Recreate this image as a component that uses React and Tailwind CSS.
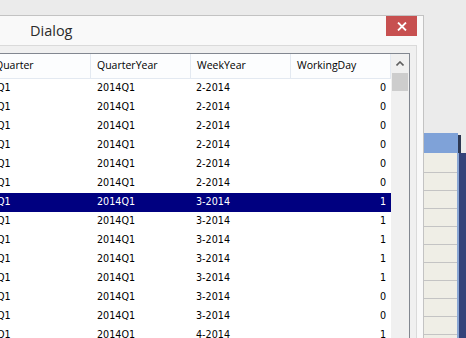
import React from 'react';

const rows = [
  ['2-2014', '0'],
  ['2-2014', '0'],
  ['2-2014', '0'],
  ['2-2014', '0'],
  ['2-2014', '0'],
  ['2-2014', '0'],
  ['3-2014', '1', true],
  ['3-2014', '1'],
  ['3-2014', '1'],
  ['3-2014', '1'],
  ['3-2014', '1'],
  ['3-2014', '0'],
  ['3-2014', '0'],
  ['4-2014', '1'],
];

const headers = ['Quarter', 'QuarterYear', 'WeekYear', 'WorkingDay'];
const widths = ['w-[102px]', 'w-[100px]', 'w-[100px]', 'w-[100px]'];

const uiFont = { fontFamily: '"Open Sans", "Noto Sans", sans-serif' };
const gridFont = { fontFamily: '"DejaVu Sans", Verdana, sans-serif' };

function CloseIcon() {
  return (
    <svg width="10" height="9" viewBox="0 0 10 9">
      <path d="M1 0.5 L9 8.5 M9 0.5 L1 8.5" stroke="#fff" strokeWidth="1.8" />
    </svg>
  );
}

function Grid() {
  return (
    <div className="flex border-t border-r border-[#828790] bg-white h-[300px]">
      <div className="w-[402px] shrink-0">
        <div className="flex h-[25px] border-b border-[#e3e9f1] bg-[#fcfdfe] text-[10.5px] text-black" style={uiFont}>
          {headers.map((h, i) => (
            <div key={h} className={`${widths[i]} shrink-0 border-r border-[#e3e9f1] pl-[6px] flex items-center`}>
              {h}
            </div>
          ))}
        </div>
        <div className="text-[9.6px]" style={gridFont}>
          {rows.map(([week, day, sel], i) => (
            <div
              key={i}
              className={`flex h-[19px] items-center ${sel ? 'bg-[#000080] text-white' : 'text-black'}`}
            >
              <div className="w-[102px] shrink-0 pl-[8px]">Q1</div>
              <div className="w-[100px] shrink-0 pl-[6px]">2014Q1</div>
              <div className="w-[100px] shrink-0 pl-[5px]">{week}</div>
              <div className="w-[100px] shrink-0 pr-[5px] text-right">{day}</div>
            </div>
          ))}
        </div>
      </div>
      <div className="w-[18px] shrink-0 bg-[#f0f0f0] flex flex-col items-center">
        <div className="h-[19px] flex items-center justify-center">
          <svg width="8" height="5" viewBox="0 0 8 5">
            <path d="M0.5 4.5 L4 1 L7.5 4.5" stroke="#606060" strokeWidth="1.6" fill="none" />
          </svg>
        </div>
        <div className="w-[16px] h-[18px] bg-[#cdcdcd]" />
      </div>
    </div>
  );
}

function BackWindow() {
  return (
    <div className="mt-[118px] shrink-0 w-[42px]">
      <div className="w-[34px] h-[20px] bg-[#7fa2d8] shadow-[3px_2px_0_#2d3852]" />
      <div className="flex">
        <div className="w-[33px] bg-[#efeee6]">
          <div className="h-[20px] border-b border-[#c4c4c4]" />
          {Array.from({ length: 10 }).map((_, i) => (
            <div key={i} className="h-[18px] border-b border-[#c4c4c4]" />
          ))}
        </div>
        <div className="w-[2px] bg-[#8aa7d4]" />
        <div className="w-[7px] bg-[#34437a]" />
      </div>
    </div>
  );
}

export default function App() {
  return (
    <div className="w-[466px] h-[338px] overflow-hidden bg-[#ebebeb] pt-[15px] flex items-start">
      <div className="ml-[-11px] w-[435px] shrink-0 border-t border-r border-[#c3c3c3] bg-[#f9f9f9] pr-[6px] h-[400px]">
        <div className="h-[29px] flex items-start justify-between">
          <div className="pl-[41px] h-[29px] flex items-center text-[14.5px] text-[#2b2b2b]" style={uiFont}>
            Dialog
          </div>
          <button className="w-[31px] h-[20px] bg-[#c75050] flex items-center justify-center">
            <CloseIcon />
          </button>
        </div>
        <div className="border-t border-r border-[#dadada] bg-[#f0f0f0] pt-[7px] pr-[6px]">
          <Grid />
        </div>
      </div>
      <BackWindow />
    </div>
  );
}
